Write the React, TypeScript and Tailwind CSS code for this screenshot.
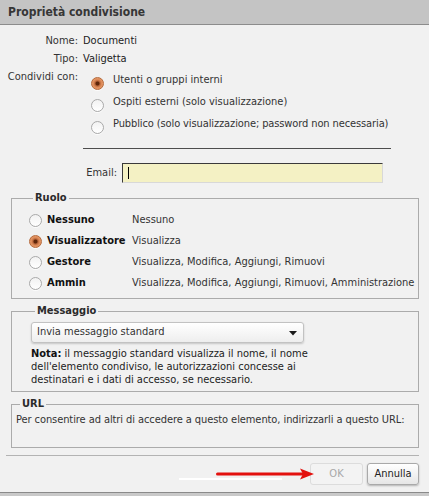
import React from "react";

function Radio({ checked }: { checked?: boolean }) {
  return checked ? (
    <span className="block w-[13px] h-[13px] shrink-0 rounded-full border border-[#b5693a] bg-[radial-gradient(circle,#5e260a_0,#5e260a_1.5px,#b8653a_2.5px,#dc8a58_4px,#eba274_6.5px)] shadow-[0_1px_0_rgba(255,255,255,0.8)]" />
  ) : (
    <span className="block w-[13px] h-[13px] shrink-0 rounded-full border border-[#a9a9a9] bg-[linear-gradient(#f2f2f2,#ffffff)] shadow-[0_1px_0_rgba(255,255,255,0.8)]" />
  );
}

const roles = [
  { name: "Nessuno", desc: "Nessuno", checked: false },
  { name: "Visualizzatore", desc: "Visualizza", checked: true },
  { name: "Gestore", desc: "Visualizza, Modifica, Aggiungi, Rimuovi", checked: false },
  { name: "Ammin", desc: "Visualizza, Modifica, Aggiungi, Rimuovi, Amministrazione", checked: false },
];

export default function App() {
  return (
    <div className="relative w-[429px] h-[496px] overflow-hidden bg-[#f1f1f1] flex flex-col text-[11px] text-[#222222] font-['DejaVu_Sans_Condensed','DejaVu_Sans',sans-serif]">
      {/* Title bar */}
      <div className="h-[25px] shrink-0 bg-[#c4c4c4] border-b border-[#8c8c8c] flex items-center pl-[8px] font-bold text-[12px] text-[#363636]">
        Proprietà condivisione
      </div>

      {/* Info */}
      <div className="mt-[7px] grid grid-cols-[78px_1fr] gap-x-[5px] leading-[18px]">
        <div className="text-right text-[#333333]">Nome:</div>
        <div>Documenti</div>
        <div className="text-right text-[#333333]">Tipo:</div>
        <div>Valigetta</div>
        <div className="text-right text-[#333333] whitespace-nowrap">Condividi con:</div>
        <div className="pt-[1px] flex flex-col">
          <div className="h-[22px] flex items-center">
            <span className="ml-[8px] mt-[6px]">
              <Radio checked />
            </span>
            <span className="ml-[9px] whitespace-nowrap text-[#333333]">Utenti o gruppi interni</span>
          </div>
          <div className="h-[22px] flex items-center">
            <span className="ml-[8px] mt-[6px]">
              <Radio />
            </span>
            <span className="ml-[9px] whitespace-nowrap text-[#333333]">Ospiti esterni (solo visualizzazione)</span>
          </div>
          <div className="h-[22px] flex items-center">
            <span className="ml-[8px] mt-[6px]">
              <Radio />
            </span>
            <span className="ml-[9px] whitespace-nowrap text-[#333333] tracking-[-0.11px]">
              Pubblico (solo visualizzazione; password non necessaria)
            </span>
          </div>
        </div>
      </div>

      {/* separator */}
      <div className="mt-[13px] ml-[83px] w-[308px] h-px bg-[#4d4d4d]" />

      {/* Email */}
      <div className="mt-[14px] flex items-center">
        <div className="w-[117px] text-right text-[#333333]">Email:</div>
        <div className="ml-[5px] w-[261px] h-[20px] bg-[#f4f1c4] border-t border-l border-[#3a3a3a] border-r border-b border-r-[#d8d8d8] border-b-[#d8d8d8] flex items-center">
          <span className="ml-[5px] w-px h-[12px] bg-black" />
        </div>
      </div>

      {/* Ruolo */}
      <fieldset className="mt-[8px] ml-[11px] mr-[10px] border border-[#ababab] pt-[5px] pb-[4px] pl-[17px]">
        <legend className="ml-[4px] px-[2px] font-bold leading-[14px] text-[#2a2a2a]">Ruolo</legend>
        {roles.map((r) => (
          <div key={r.name} className="h-[21px] flex items-center">
            <Radio checked={r.checked} />
            <span className="ml-[5px] w-[85px] font-bold text-[#111111] whitespace-nowrap">{r.name}</span>
            <span className="whitespace-nowrap text-[#333333]">{r.desc}</span>
          </div>
        ))}
      </fieldset>

      {/* Messaggio */}
      <fieldset className="mt-[5px] ml-[11px] mr-[10px] border border-[#ababab] pt-[4px] pb-[5px] pl-[19px]">
        <legend className="ml-[4px] px-[2px] font-bold leading-[14px] text-[#2a2a2a]">Messaggio</legend>
        <div className="w-[273px] h-[21px] rounded-[3px] border border-[#c2c2c2] bg-[linear-gradient(#ffffff,#eeeeee)] shadow-[0_1px_2px_rgba(0,0,0,0.18)] flex items-center pl-[5px] pr-[6px]">
          <span className="flex-1 text-[#333333]">Invia messaggio standard</span>
          <svg width="8" height="5" viewBox="0 0 8 5" className="mt-[1px]">
            <polygon points="0,0 8,0 4,4.5" fill="#1a1a1a" />
          </svg>
        </div>
        <div className="mt-[4px] leading-[13px] text-[#222222]">
          <div>
            <b className="text-[#111111]">Nota:</b> il messaggio standard visualizza il nome, il nome
          </div>
          <div>dell'elemento condiviso, le autorizzazioni concesse ai</div>
          <div>destinatari e i dati di accesso, se necessario.</div>
        </div>
      </fieldset>

      {/* URL */}
      <fieldset className="mt-[5px] ml-[11px] mr-[10px] border border-[#ababab] pt-[2px] pb-[20px] pl-[4px]">
        <legend className="ml-[4px] px-[2px] font-bold leading-[14px] text-[#2a2a2a]">URL</legend>
        <div className="leading-[14px] text-[#333333] whitespace-nowrap tracking-[-0.08px]">
          Per consentire ad altri di accedere a questo elemento, indirizzarli a questo URL:
        </div>
      </fieldset>

      {/* bottom separator */}
      <div className="mt-[7px] ml-[6px] w-[413px] h-px bg-[#b3b3b3]" />

      {/* Buttons */}
      <div className="mt-[7px] mr-[10px] flex justify-end gap-[4px]">
        <button className="w-[53px] h-[22px] rounded-[3px] border border-[#dcdcdc] bg-[#f3f3f3] text-[#a8a8a8]">
          OK
        </button>
        <button className="w-[52px] h-[22px] rounded-[3px] border border-[#a9a9a9] bg-[linear-gradient(#ffffff,#e6e6e6)] shadow-[0_1px_2px_rgba(0,0,0,0.25)] text-[#222222]">
          Annulla
        </button>
      </div>

      {/* bottom window edge */}
      <div className="mt-auto h-[4px] border-t border-[#8a8a8a] bg-[#c9c9c9]" />

      {/* annotation overlay */}
      <div className="absolute left-[179px] top-[478px] w-[103px] h-[2px] bg-white" />
      <svg className="absolute left-[214px] top-[467px]" width="102" height="14" viewBox="0 0 102 14">
        <rect x="2" y="5.5" width="88" height="3" rx="1.5" fill="#e3110e" />
        <polygon points="86,1.5 100,7 86,12.5 89,7" fill="#e3110e" />
      </svg>
    </div>
  );
}
